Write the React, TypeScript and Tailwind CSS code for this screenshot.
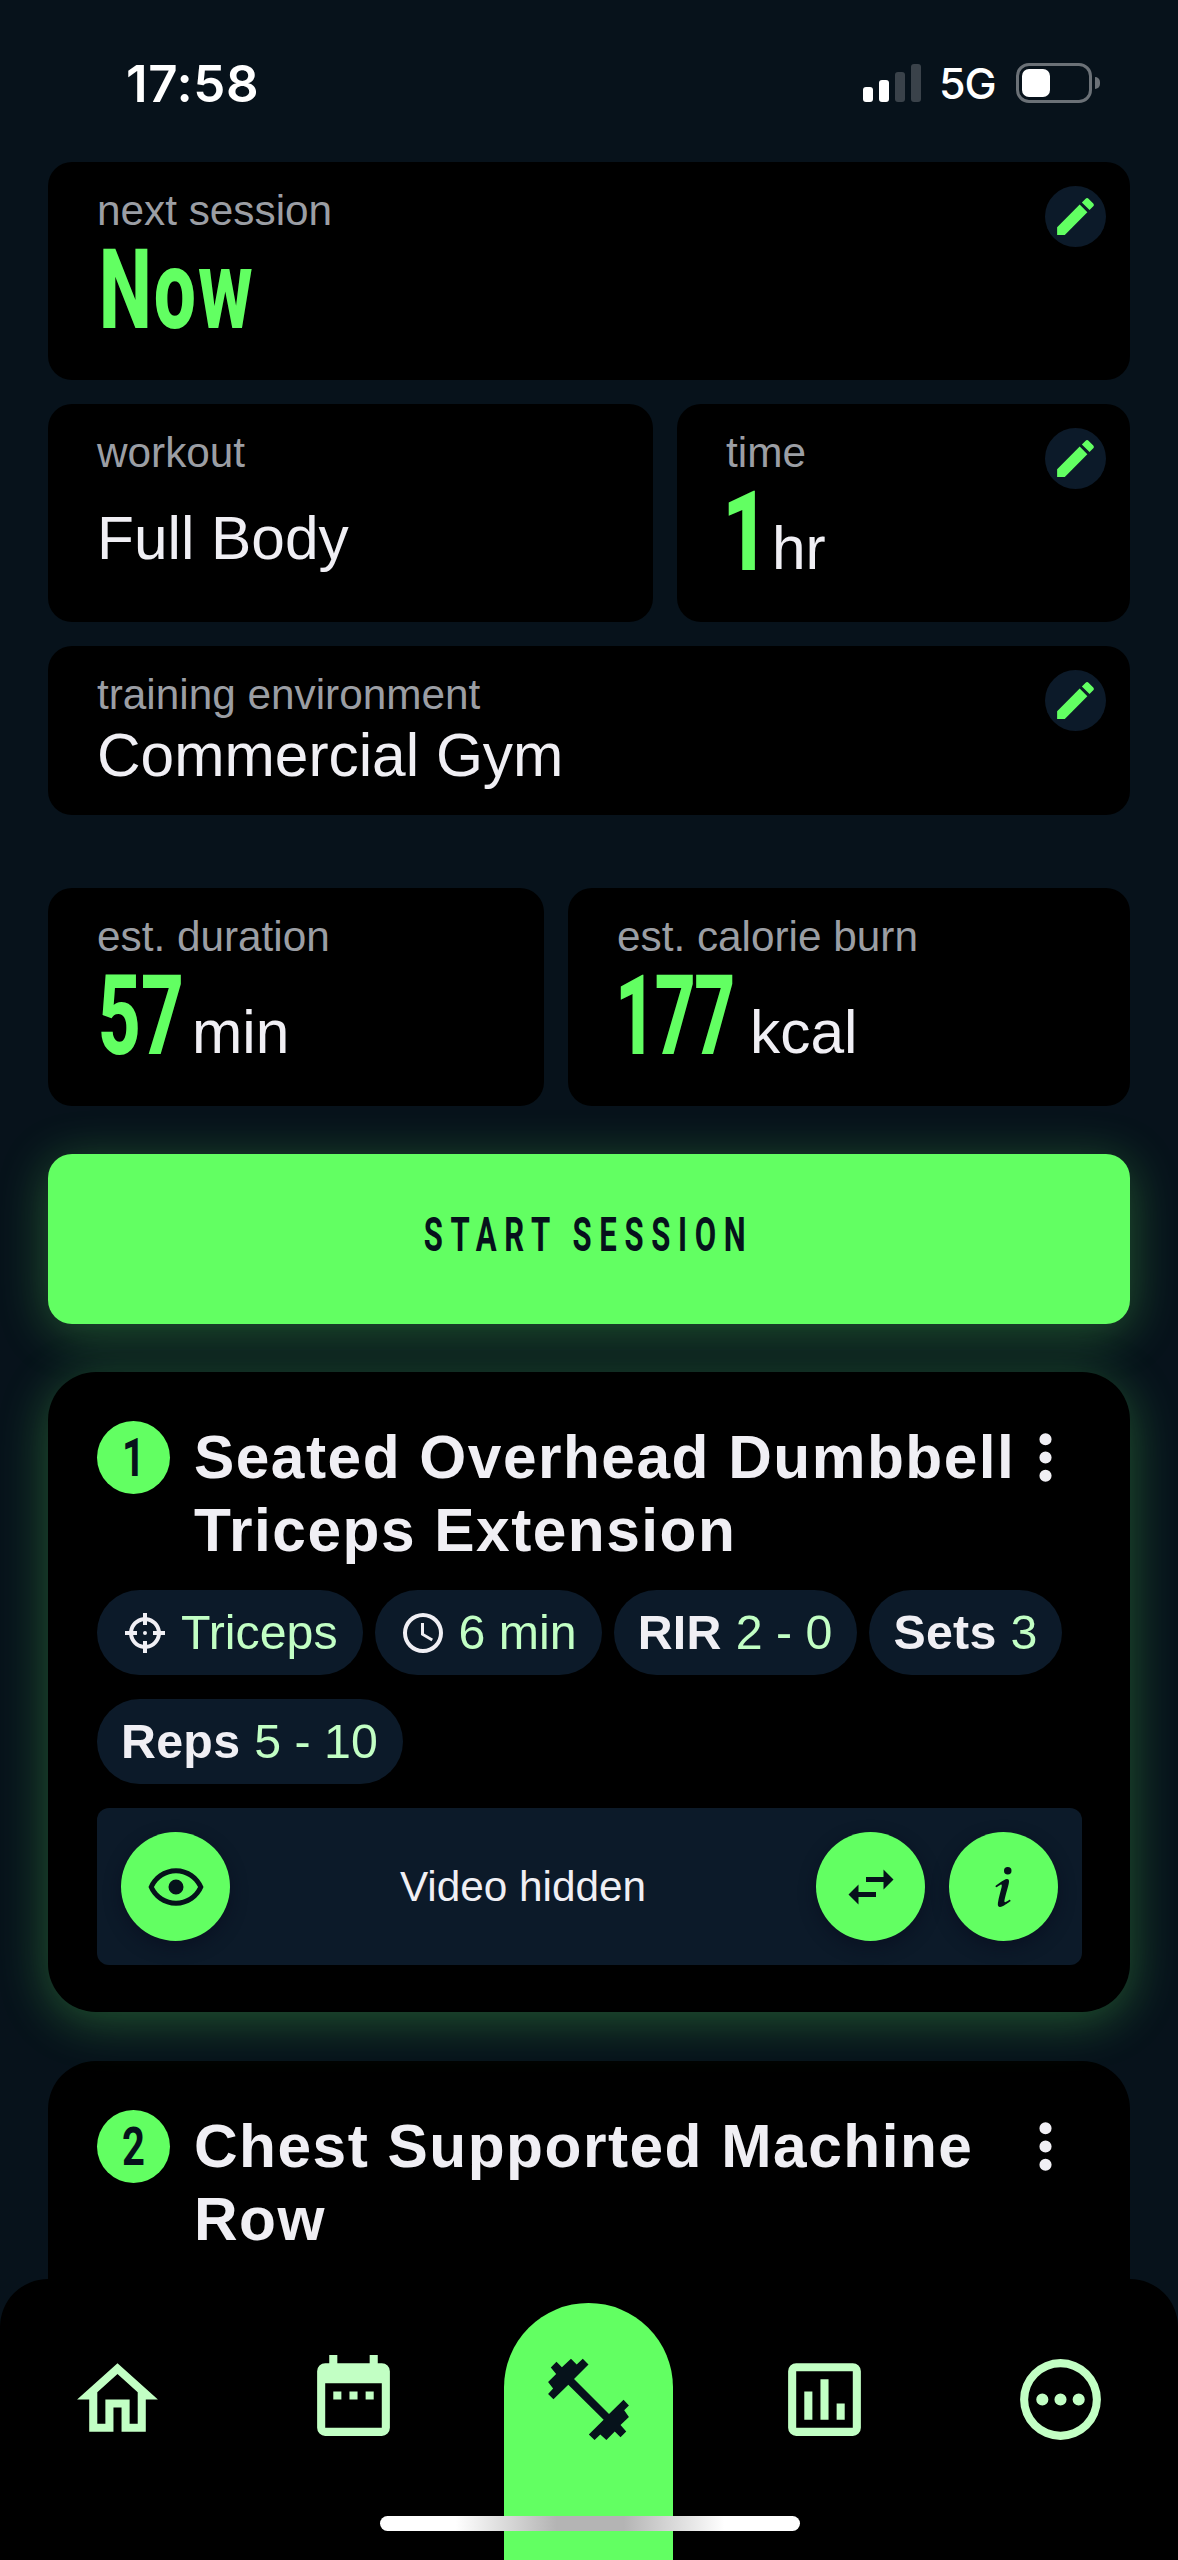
import type { ReactNode } from "react";

const ICONS = {
  pencil:
    "M20.71 7.04c.39-.39.39-1.04 0-1.41l-2.34-2.34c-.37-.39-1.02-.39-1.41 0l-1.84 1.83 3.75 3.75M3 17.25V21h3.75L17.81 9.93l-3.75-3.75L3 17.25z",
  target:
    "M11 2v2.07C7.38 4.53 4.53 7.38 4.07 11H2v2h2.07c.46 3.62 3.31 6.47 6.93 6.93V22h2v-2.07c3.62-.46 6.47-3.31 6.93-6.93H22v-2h-2.07C19.47 7.38 16.62 4.53 13 4.07V2M11 6.08V8h2V6.09c2.5.41 4.5 2.41 4.92 4.91H16v2h1.91c-.41 2.5-2.41 4.5-4.91 4.92V16h-2v1.91C8.5 17.5 6.5 15.5 6.08 13H8v-2H6.09C6.5 8.5 8.5 6.5 11 6.08M12 11a1 1 0 0 0-1 1 1 1 0 0 0 1 1 1 1 0 0 0 1-1 1 1 0 0 0-1-1z",
  clock:
    "M12 20a8 8 0 0 0 8-8 8 8 0 0 0-8-8 8 8 0 0 0-8 8 8 8 0 0 0 8 8m0-18a10 10 0 0 1 10 10 10 10 0 0 1-10 10A10 10 0 0 1 2 12 10 10 0 0 1 12 2m.5 5v5.25l4.5 2.67-.75 1.23L11 13V7h1.5z",
  more: "M12 16a2 2 0 1 1 0 4 2 2 0 0 1 0-4m0-6a2 2 0 1 1 0 4 2 2 0 0 1 0-4m0-6a2 2 0 1 1 0 4 2 2 0 0 1 0-4z",
  eye: "M12 9a3 3 0 0 1 3 3 3 3 0 0 1-3 3 3 3 0 0 1-3-3 3 3 0 0 1 3-3m0-4.5c5 0 9.27 3.11 11 7.5-1.73 4.39-6 7.5-11 7.5S2.73 16.39 1 12c1.73-4.39 6-7.5 11-7.5M3.18 12c1.65 3.36 5.06 5.5 8.82 5.5s7.17-2.14 8.82-5.5C19.17 8.64 15.76 6.5 12 6.5S4.83 8.64 3.18 12z",
  swap: "M21 9l-4-4v3h-7v2h7v3M7 11l-4 4 4 4v-3h7v-2H7v-3z",
  info: "M13.5 4A1.5 1.5 0 0 0 12 5.5 1.5 1.5 0 0 0 13.5 7 1.5 1.5 0 0 0 15 5.5 1.5 1.5 0 0 0 13.5 4M13.14 8.77C11.95 8.87 8.7 11.46 8.7 11.46 8.5 11.61 8.56 11.6 8.72 11.88 8.88 12.15 8.86 12.17 9.05 12.04 9.25 11.91 9.58 11.7 10.13 11.36 12.25 10 10.47 13.14 9.56 18.43 9.2 21.05 11.56 19.7 12.17 19.3 12.77 18.91 14.38 17.8 14.54 17.69 14.76 17.54 14.6 17.42 14.43 17.17 14.31 17 14.19 17.12 14.19 17.12 13.54 17.55 12.35 18.45 12.19 17.88 12 17.31 13.22 13.4 13.89 10.71 14 10.07 14.3 8.67 13.14 8.77z",
  home: "M12 5.69l5 4.5V18h-2v-6H9v6H7v-7.81l5-4.5M12 3L2 12h3v8h6v-6h2v6h6v-8h3L12 3z",
  calendar:
    "M9 10v2H7v-2h2m4 0v2h-2v-2h2m4 0v2h-2v-2h2m2-7a2 2 0 0 1 2 2v14a2 2 0 0 1-2 2H5a2 2 0 0 1-2-2V5a2 2 0 0 1 2-2h1V1h2v2h8V1h2v2h1m0 16V8H5v11h14z",
  dumbbell:
    "M4.08 2.67L5.42 4 7.67 1.92 9.08 3.33 10.58 1.92 12 3.33 8.42 6.92l8.66 8.66 3.59-3.5L22 13.5l-1.17 1.17L22 16.33l-2.08 2 1.42 1.59-1.42 1.41-1.42-1.41L16.42 22l-1.5-1.33L13.5 22l-1.42-1.33 3.67-3.67L7 8.33l-3.67 3.59L2 10.67l1.25-1.42L2 7.67l2-2-1.33-1.59z",
  chart:
    "M9 17H7v-7h2v7m4 0h-2V7h2v10m4 0h-2v-4h2v4m2 2H5V5h14v14m0-16H5a2 2 0 0 0-2 2v14a2 2 0 0 0 2 2h14a2 2 0 0 0 2-2V5a2 2 0 0 0-2-2z",
  dots: "M12 2A10 10 0 0 0 2 12a10 10 0 0 0 10 10 10 10 0 0 0 10-10A10 10 0 0 0 12 2m0 2a8 8 0 0 1 8 8 8 8 0 0 1-8 8 8 8 0 0 1-8-8 8 8 0 0 1 8-8m0 6.5a1.5 1.5 0 1 0 0 3 1.5 1.5 0 0 0 0-3m-4.5 0a1.5 1.5 0 1 0 0 3 1.5 1.5 0 0 0 0-3m9 0a1.5 1.5 0 1 0 0 3 1.5 1.5 0 0 0 0-3z",
};

function Icon({ name, className }: { name: keyof typeof ICONS; className: string }) {
  return (
    <svg viewBox="0 0 24 24" fill="currentColor" fillRule="evenodd" className={`shrink-0 ${className}`}>
      <path d={ICONS[name]} />
    </svg>
  );
}

export default function App() {
  return (
    <div className="relative h-[2560px] w-[1178px] overflow-hidden bg-[#07121b] font-['Liberation_Sans',sans-serif] text-[#f0eff4]">
      <StatusBar />

      <main className="flex flex-col px-12">
        <div className="flex flex-col gap-6">
          <StatCard label="next session" className="h-[218px]" editable>
            <Value text="Now" className="w-40 pl-0.5" textClassName="scale-x-[0.675] tracking-[3px]" />
          </StatCard>
          <div className="flex gap-6">
            <StatCard label="workout" className="h-[218px] w-[605px]">
              <span className="self-center text-[60.4px] leading-[72px]">Full Body</span>
            </StatCard>
            <StatCard label="time" className="h-[218px] flex-1" editable>
              <Value text="1" unit="hr" className="w-[46px]" textClassName="-ml-1 scale-x-[0.74]" />
            </StatCard>
          </div>
          <StatCard label="training environment" className="h-[169px]" editable>
            <span className="text-[60.4px] leading-[72px]">Commercial Gym</span>
          </StatCard>
        </div>

        <div className="mt-[73px] flex gap-6">
          <StatCard label="est. duration" className="h-[218px] w-[496px]">
            <Value text="57" unit="min" className="w-[95px]" textClassName="ml-px scale-x-[0.67]" />
          </StatCard>
          <StatCard label="est. calorie burn" className="h-[218px] flex-1">
            <Value text="177" unit="kcal" className="w-[133px]" textClassName="-ml-0.5 scale-x-[0.64] tracking-[-2px]" />
          </StatCard>
        </div>

        <button className="mt-12 flex h-[170px] items-center justify-center rounded-[24px] bg-[#62ff62] text-[#06121b] shadow-[0_8px_50px_rgba(98,255,98,0.3)]">
          <span className="mb-2 scale-x-[0.64] font-['Roboto',sans-serif] text-[48.5px] font-bold tracking-[12px] whitespace-nowrap">
            START SESSION
          </span>
        </button>

        <section className="relative mt-12 h-[640px] rounded-[48px] bg-black px-[49px] pt-[49px] shadow-[0_8px_50px_rgba(98,255,98,0.3)]">
          <ExerciseTitle index={1} title="Seated Overhead Dumbbell Triceps Extension" />
          <div className="mt-6 flex flex-wrap gap-x-3 gap-y-6">
            <Chip icon="target" value="Triceps" />
            <Chip icon="clock" value="6 min" />
            <Chip label="RIR" value="2 - 0" />
            <Chip label="Sets" value="3" />
            <Chip label="Reps" value="5 - 10" />
          </div>
          <div className="-mr-px mt-6 flex h-[157px] items-center rounded-xl bg-[#0c1a29] px-6">
            <RoundButton icon="eye" />
            <span className="flex-1 text-center text-[42.3px]">Video hidden</span>
            <div className="flex gap-6">
              <RoundButton icon="swap" />
              <RoundButton icon="info" />
            </div>
          </div>
        </section>

        <section className="mt-[49px] h-[500px] rounded-t-[48px] bg-black px-[49px] pt-[49px]">
          <ExerciseTitle index={2} title="Chest Supported Machine Row" />
        </section>
      </main>

      <TabBar />
    </div>
  );
}

function StatusBar() {
  return (
    <header className="flex h-[162px] items-start justify-between pr-[78px] pl-[126px] font-['Inter',sans-serif] text-white">
      <span className="mt-[54px] text-[51px] leading-[60px] font-semibold tracking-[0.6px]">17:58</span>
      <div className="mt-[63px] flex h-10 items-center">
        <div className="flex h-[38px] items-end gap-[5.5px]">
          <i className="h-[15px] w-[10.5px] rounded-[3px] bg-white" />
          <i className="h-[22px] w-[10.5px] rounded-[3px] bg-white" />
          <i className="h-[30px] w-[10.5px] rounded-[3px] bg-[#3a424a]" />
          <i className="h-[38px] w-[10.5px] rounded-[3px] bg-[#3a424a]" />
        </div>
        <span className="ml-[18px] w-[59px] text-[43px] leading-10 font-medium tracking-[-1px]">5G</span>
        <div className="ml-[18px] h-10 w-[76px] rounded-[13px] border-[3px] border-[#6b7177] p-[3px]">
          <div className="h-full w-[28px] rounded-[7px] bg-white" />
        </div>
        <div className="ml-[3px] h-3 w-[5px] rounded-r-full bg-[#6b7177]" />
      </div>
    </header>
  );
}

type StatCardProps = { label: string; className: string; editable?: boolean; children: ReactNode };

function StatCard({ label, className, editable, children }: StatCardProps) {
  return (
    <div className={`relative flex flex-col rounded-[24px] bg-black px-12 pt-[25px] pb-6 ${className}`}>
      <span className="pl-px text-[42.3px] leading-[48px] text-[#9b9ea4]">{label}</span>
      <div className="flex flex-1 pl-px">{children}</div>
      {editable && (
        <button className="absolute top-6 right-6 flex size-[61px] items-center justify-center rounded-full bg-[#0c1a29] text-[#62ff62]">
          <Icon name="pencil" className="size-[49px]" />
        </button>
      )}
    </div>
  );
}

type ValueProps = { text: string; unit?: string; className: string; textClassName: string };

function Value({ text, unit, className, textClassName }: ValueProps) {
  return (
    <div className="flex items-baseline">
      <span className={`font-['Roboto',sans-serif] text-[111px] leading-[110px] font-extrabold text-[#62ff62] ${className}`}>
        <span className={`inline-block origin-left whitespace-nowrap ${textClassName}`}>{text}</span>
      </span>
      {unit && <span className="relative -top-px text-[60.4px]">{unit}</span>}
    </div>
  );
}

function ExerciseTitle({ index, title }: { index: number; title: string }) {
  return (
    <div className="flex items-start">
      <div className="flex size-[73px] shrink-0 items-center justify-center rounded-full bg-[#62ff62] text-[#06121b]">
        <span className="scale-x-[0.74] font-['Roboto',sans-serif] text-[54px] leading-none font-bold">{index}</span>
      </div>
      <h2 className="ml-6 w-[830px] shrink-0 text-[60.4px] leading-[72.5px] font-bold tracking-[1.5px]">{title}</h2>
      <Icon name="more" className="-ml-[15px] size-[73px]" />
    </div>
  );
}

function Chip({ icon, label, value }: { icon?: "target" | "clock"; label?: string; value: string }) {
  return (
    <div className="flex h-[85px] items-center rounded-full bg-[#0c1a29] pr-[25px] pl-6 text-[48.3px] leading-none">
      {icon && <Icon name={icon} className="mr-3 size-12" />}
      {label && <b className="mr-3.5 tracking-[0.3px]">{label}</b>}
      <span className="text-[#c2ffc4]">{value}</span>
    </div>
  );
}

function RoundButton({ icon }: { icon: "eye" | "swap" | "info" }) {
  return (
    <button className="flex size-[109px] items-center justify-center rounded-full bg-[#62ff62] text-[#06121b] shadow-[0_6px_16px_rgba(8,12,30,0.6)]">
      <Icon name={icon} className="size-[60px]" />
    </button>
  );
}

function TabBar() {
  return (
    <nav className="absolute inset-x-0 bottom-0 grid h-[281px] grid-cols-5 justify-items-center rounded-t-[48px] bg-black text-[#c2ffc4]">
      <Icon name="home" className="mt-[72px] size-[97px]" />
      <Icon name="calendar" className="mt-[72px] size-[97px]" />
      <div className="mt-6 flex h-[257px] w-[169px] justify-center rounded-t-full bg-[#62ff62] text-[#06121b]">
        <Icon name="dumbbell" className="mt-12 size-[97px]" />
      </div>
      <Icon name="chart" className="mt-[72px] size-[97px]" />
      <Icon name="dots" className="mt-[72px] size-[97px]" />
      <div className="absolute bottom-[29px] left-[380px] h-[15px] w-[420px] rounded-full bg-[linear-gradient(90deg,#fff_18%,#b4b4b4_42%,#b4b4b4_58%,#fff_82%)]" />
    </nav>
  );
}
